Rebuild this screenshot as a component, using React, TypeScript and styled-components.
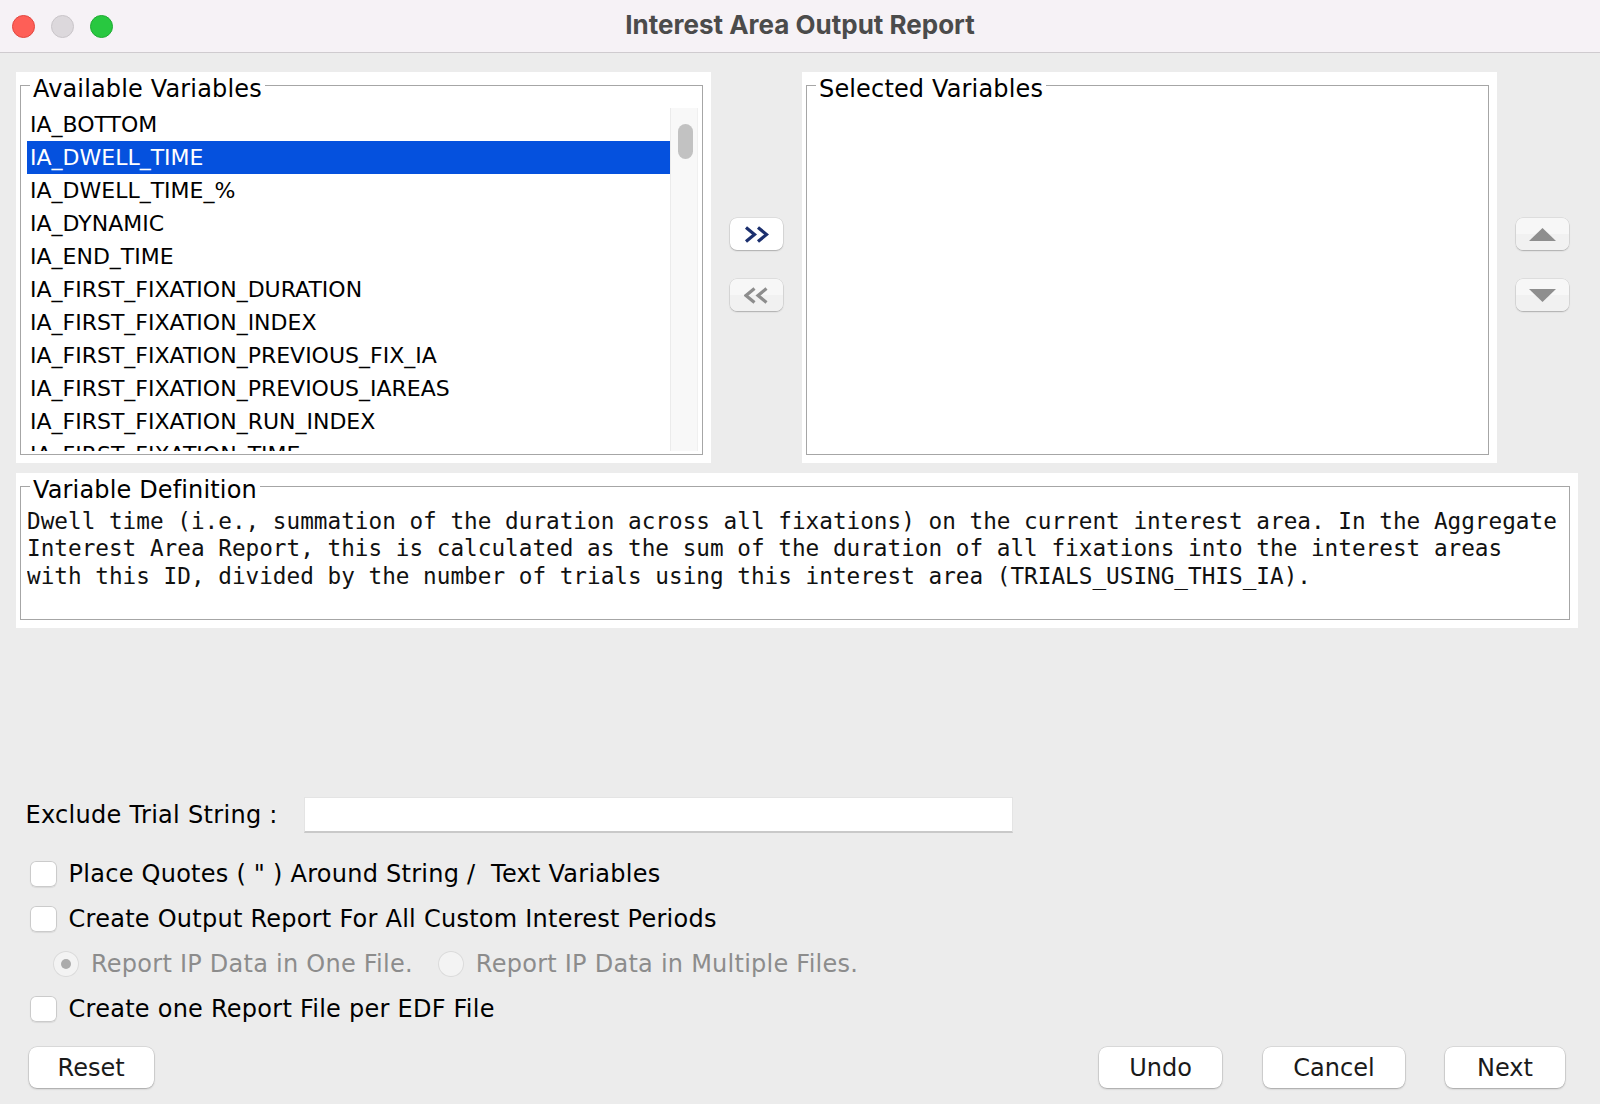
import React from "react";
import styled, { createGlobalStyle } from "styled-components";

const GlobalStyle = createGlobalStyle`
  html, body {
    margin: 0;
    padding: 0;
  }
  body {
    background: #ececec;
    font-family: "DejaVu Sans", "Liberation Sans", sans-serif;
    color: #000;
  }
  * {
    box-sizing: border-box;
  }
`;

const Window = styled.div`
  height: 100vh;
  display: flex;
  flex-direction: column;
  background: #ececec;
  overflow: hidden;
`;

const TitleBar = styled.div`
  height: 53px;
  flex-shrink: 0;
  background: #f6f2f6;
  border-bottom: 1px solid #cfcbcf;
  display: grid;
  grid-template-columns: 1fr auto 1fr;
  align-items: center;
`;

const Lights = styled.div`
  display: flex;
  gap: 16px;
  padding-left: 12px;
`;

const Light = styled.span<{ $bg: string; $edge: string }>`
  width: 23px;
  height: 23px;
  border-radius: 50%;
  background: ${(p) => p.$bg};
  border: 1px solid ${(p) => p.$edge};
`;

const Title = styled.div`
  font-family: Inter, "Liberation Sans", sans-serif;
  font-weight: 700;
  font-size: 26px;
  color: #4b4b4b;
  padding-bottom: 4px;
`;

const Body = styled.div`
  flex: 1;
  display: flex;
  flex-direction: column;
  padding: 19px 0 16px 16px;
`;

const TopRow = styled.div`
  display: flex;
  height: 391px;
`;

const Panel = styled.div<{ $w: number }>`
  width: ${(p) => p.$w}px;
  flex-shrink: 0;
  background: #fff;
  padding: 0 8px 8px 4px;
  display: flex;
`;

const Group = styled.fieldset<{ $pt: number }>`
  margin: 0;
  padding: ${(p) => p.$pt}px 4px 3px 6px;
  border: 1px solid #a6a6a6;
  flex: 1;
  min-width: 0;
  display: flex;
  flex-direction: column;
`;

const Legend = styled.legend`
  padding: 8px 3px 0;
  margin-left: 3px;
  font-size: 24px;
  line-height: 18px;
  letter-spacing: 0.15px;
  color: #000;
`;

const ListArea = styled.div`
  flex: 1;
  display: flex;
  min-height: 0;
  overflow: hidden;
`;

const Items = styled.div`
  flex: 1;
  overflow: hidden;
`;

const Item = styled.div<{ $selected?: boolean }>`
  height: 33px;
  line-height: 33px;
  padding-left: 3px;
  font-size: 22px;
  white-space: nowrap;
  background: ${(p) => (p.$selected ? "#0551de" : "transparent")};
  color: ${(p) => (p.$selected ? "#fff" : "#000")};
`;

const ScrollTrack = styled.div`
  width: 28px;
  background: #f8f8f8;
  border-left: 1px solid #ebebeb;
  border-right: 1px solid #f0f0f0;
  padding: 16px 0 0 7px;
`;

const Thumb = styled.div`
  width: 15px;
  height: 35px;
  border-radius: 8px;
  background: #c2c2c2;
`;

const ButtonColumn = styled.div<{ $ml: number; $mr: number }>`
  width: 53px;
  flex-shrink: 0;
  margin-left: ${(p) => p.$ml}px;
  margin-right: ${(p) => p.$mr}px;
  display: flex;
  flex-direction: column;
  gap: 29px;
  padding-top: 146px;
`;

const IconButton = styled.div<{ $disabled?: boolean }>`
  height: 32px;
  border-radius: 7px;
  background: ${(p) =>
    p.$disabled
      ? "linear-gradient(#f7f7f7 0 50%, #f1f1f1 50% 100%)"
      : "#fff"};
  box-shadow: 0 0 0 0.5px rgba(0, 0, 0, 0.12), 0 1px 1.5px rgba(0, 0, 0, 0.22);
  display: flex;
  align-items: center;
  justify-content: center;
`;

const DefPanel = styled(Panel)`
  margin-top: 10px;
  height: 155px;
`;

const DefText = styled.div`
  font-family: "DejaVu Sans Mono", "Liberation Mono", monospace;
  font-size: 22.7px;
  line-height: 27.5px;
  height: 110px;
  white-space: pre;
  color: #111;
  overflow: hidden;
`;

const Form = styled.div`
  margin-top: auto;
  display: flex;
  flex-direction: column;
`;

const ExcludeRow = styled.div`
  display: grid;
  grid-template-columns: 278.5px 709px;
  align-items: center;
  height: 36px;
  padding-left: 9.5px;
`;

const FieldLabel = styled.span`
  font-size: 24px;
  letter-spacing: 0.3px;
`;

const TextField = styled.div`
  height: 36px;
  background: #fff;
  border: 1px solid #e4e4e4;
  border-bottom: 2px solid #c9c9c9;
`;

const Options = styled.div`
  margin-top: 18.5px;
  display: flex;
  flex-direction: column;
`;

const OptionRow = styled.div<{ $indent: number }>`
  height: 45px;
  display: flex;
  align-items: center;
  padding-left: ${(p) => p.$indent}px;
`;

const Option = styled.label<{ $disabled?: boolean; $ml?: number }>`
  display: flex;
  align-items: center;
  gap: 12px;
  margin-left: ${(p) => p.$ml ?? 0}px;
  font-size: 24px;
  letter-spacing: 0.25px;
  color: ${(p) => (p.$disabled ? "#8c8c8c" : "#000")};
  white-space: pre;
`;

const CheckBox = styled.span`
  width: 27px;
  height: 26px;
  border-radius: 6px;
  background: #fff;
  box-shadow: inset 0 0 0 1px #cbcbcb, 0 1px 1px rgba(0, 0, 0, 0.08);
`;

const Radio = styled.span<{ $on?: boolean }>`
  width: 26px;
  height: 26px;
  border-radius: 50%;
  background: #f3f3f3;
  box-shadow: inset 0 0 0 1px #dadada;
  display: flex;
  align-items: center;
  justify-content: center;
  &::after {
    content: "";
    width: 10px;
    height: 10px;
    border-radius: 50%;
    background: ${(p) => (p.$on ? "#ababab" : "transparent")};
  }
`;

const ButtonRow = styled.div`
  margin-top: 15.5px;
  display: flex;
  align-items: center;
  padding-left: 12.6px;
  padding-right: 35px;
`;

const PushButton = styled.button<{ $w: number; $ml?: string }>`
  width: ${(p) => p.$w}px;
  height: 41px;
  margin-left: ${(p) => p.$ml ?? "0"};
  border: none;
  border-radius: 8px;
  background: #fff;
  box-shadow: 0 0 0 0.5px rgba(0, 0, 0, 0.14), 0 1px 2px rgba(0, 0, 0, 0.25);
  font-family: "DejaVu Sans", "Liberation Sans", sans-serif;
  font-size: 24px;
  color: #1a1a1a;
  padding: 0;
`;

const variables = [
  "IA_BOTTOM",
  "IA_DWELL_TIME",
  "IA_DWELL_TIME_%",
  "IA_DYNAMIC",
  "IA_END_TIME",
  "IA_FIRST_FIXATION_DURATION",
  "IA_FIRST_FIXATION_INDEX",
  "IA_FIRST_FIXATION_PREVIOUS_FIX_IA",
  "IA_FIRST_FIXATION_PREVIOUS_IAREAS",
  "IA_FIRST_FIXATION_RUN_INDEX",
  "IA_FIRST_FIXATION_TIME",
  "IA_FIRST_FIXATION_VISITED_IA_COUNT",
];

const definition = [
  "Dwell time (i.e., summation of the duration across all fixations) on the current interest area. In the Aggregate",
  "Interest Area Report, this is calculated as the sum of the duration of all fixations into the interest areas",
  "with this ID, divided by the number of trials using this interest area (TRIALS_USING_THIS_IA).",
];

function Chevrons({ dir, color }: { dir: "right" | "left"; color: string }) {
  const pts =
    dir === "right"
      ? ["2,1.5 10.5,8.5 2,15.5", "14,1.5 22.5,8.5 14,15.5"]
      : ["10.5,1.5 2,8.5 10.5,15.5", "22.5,1.5 14,8.5 22.5,15.5"];
  return (
    <svg width="25" height="17" viewBox="0 0 25 17">
      {pts.map((p) => (
        <polyline key={p} points={p} fill="none" stroke={color} strokeWidth="3.2" strokeLinejoin="miter" />
      ))}
    </svg>
  );
}

function Triangle({ up }: { up?: boolean }) {
  return (
    <svg width="27" height="13" viewBox="0 0 27 13">
      <polygon points={up ? "13.5,0 27,13 0,13" : "0,0 27,0 13.5,13"} fill="#8e8e8e" />
    </svg>
  );
}

export default function App() {
  return (
    <Window>
      <GlobalStyle />
      <TitleBar>
        <Lights>
          <Light $bg="#fe5f57" $edge="#e2463f" />
          <Light $bg="#dcd8dc" $edge="#c9c5c9" />
          <Light $bg="#28c840" $edge="#1eab32" />
        </Lights>
        <Title>Interest Area Output Report</Title>
        <div />
      </TitleBar>
      <Body>
        <TopRow>
          <Panel $w={695}>
            <Group $pt={10}>
              <Legend>Available Variables</Legend>
              <ListArea>
                <Items>
                  {variables.map((v, i) => (
                    <Item key={v} $selected={i === 1}>
                      {v}
                    </Item>
                  ))}
                </Items>
                <ScrollTrack>
                  <Thumb />
                </ScrollTrack>
              </ListArea>
            </Group>
          </Panel>
          <ButtonColumn $ml={19} $mr={19}>
            <IconButton>
              <Chevrons dir="right" color="#1b2f6e" />
            </IconButton>
            <IconButton $disabled>
              <Chevrons dir="left" color="#8d8d8d" />
            </IconButton>
          </ButtonColumn>
          <Panel $w={695}>
            <Group $pt={10}>
              <Legend>Selected Variables</Legend>
            </Group>
          </Panel>
          <ButtonColumn $ml={19} $mr={0}>
            <IconButton $disabled>
              <Triangle up />
            </IconButton>
            <IconButton $disabled>
              <Triangle />
            </IconButton>
          </ButtonColumn>
        </TopRow>

        <DefPanel $w={1562}>
          <Group $pt={8.5}>
            <Legend>Variable Definition</Legend>
            <DefText>
              {definition.map((line) => (
                <div key={line}>{line}</div>
              ))}
            </DefText>
          </Group>
        </DefPanel>

        <Form>
          <ExcludeRow>
            <FieldLabel>Exclude Trial String :</FieldLabel>
            <TextField />
          </ExcludeRow>
          <Options>
            <OptionRow $indent={13.6}>
              <Option>
                <CheckBox />
                {'Place Quotes ( " ) Around String /  Text Variables'}
              </Option>
            </OptionRow>
            <OptionRow $indent={13.6}>
              <Option>
                <CheckBox />
                Create Output Report For All Custom Interest Periods
              </Option>
            </OptionRow>
            <OptionRow $indent={37}>
              <Option $disabled>
                <Radio $on />
                Report IP Data in One File.
              </Option>
              <Option $disabled $ml={25}>
                <Radio />
                Report IP Data in Multiple Files.
              </Option>
            </OptionRow>
            <OptionRow $indent={13.6}>
              <Option>
                <CheckBox />
                Create one Report File per EDF File
              </Option>
            </OptionRow>
          </Options>
          <ButtonRow>
            <PushButton $w={125}>Reset</PushButton>
            <PushButton $w={123} $ml="auto">
              Undo
            </PushButton>
            <PushButton $w={142} $ml="41px">
              Cancel
            </PushButton>
            <PushButton $w={120} $ml="40px">
              Next
            </PushButton>
          </ButtonRow>
        </Form>
      </Body>
    </Window>
  );
}
